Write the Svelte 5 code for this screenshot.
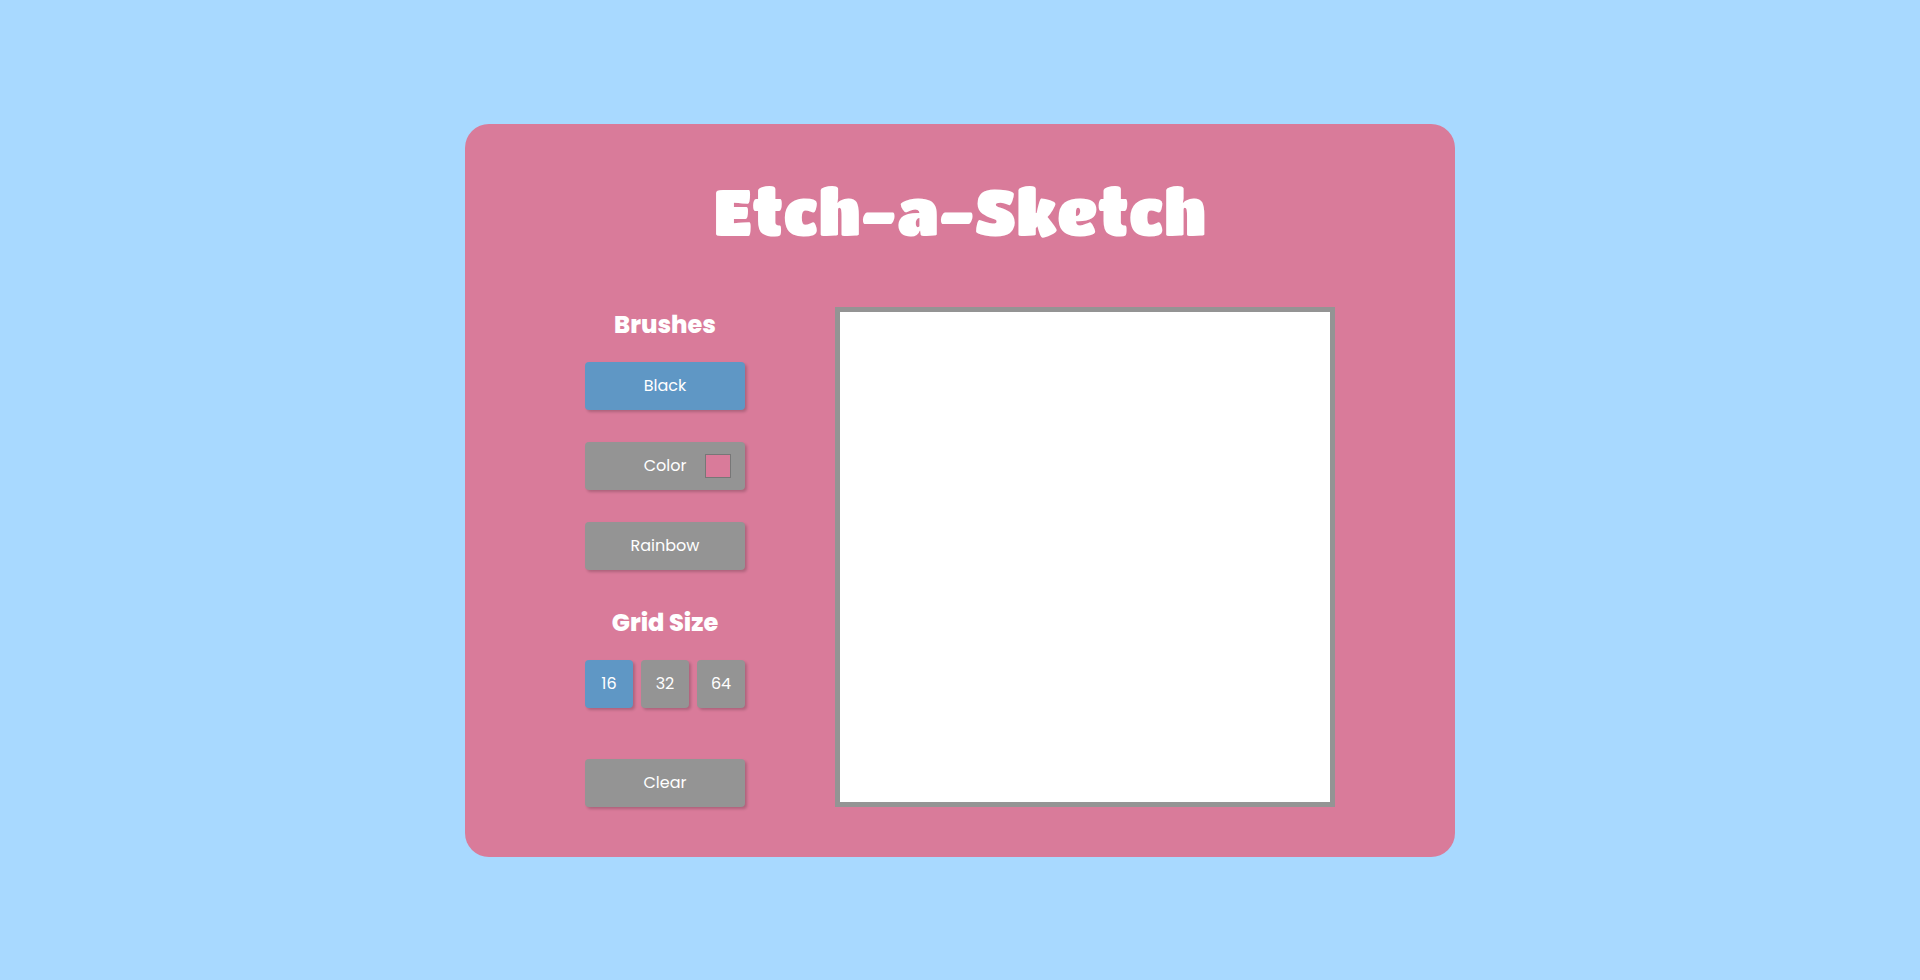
<script>
  let brush = $state('black');
  let size = $state(16);
  let color = $state('#d97b9a');
  let board;

  const brushes = [
    { id: 'black', label: 'Black' },
    { id: 'color', label: 'Color' },
    { id: 'rainbow', label: 'Rainbow' }
  ];
  const sizes = [16, 32, 64];

  function clear() {
    board.getContext('2d').clearRect(0, 0, board.width, board.height);
  }

  function setSize(n) {
    size = n;
    clear();
  }

  function ink() {
    if (brush === 'color') return color;
    if (brush === 'rainbow') return `hsl(${Math.floor(Math.random() * 360)} 90% 60%)`;
    return '#000';
  }

  function paint(event) {
    const box = board.getBoundingClientRect();
    const cell = board.width / size;
    const col = Math.floor(((event.clientX - box.left - board.clientLeft) / board.clientWidth) * size);
    const row = Math.floor(((event.clientY - box.top - board.clientTop) / board.clientHeight) * size);
    const ctx = board.getContext('2d');
    ctx.fillStyle = ink();
    ctx.fillRect(col * cell, row * cell, cell, cell);
  }
</script>

<main class="page">
  <div class="card">
    <h1>Etch-a-Sketch</h1>
    <div class="content">
      <div class="controls">
        <section aria-labelledby="brushes-title">
          <h2 id="brushes-title">Brushes</h2>
          <div class="stack">
            {#each brushes as b}
              <div class="brush">
                <button type="button" class:active={brush === b.id} onclick={() => (brush = b.id)}>{b.label}</button>
                {#if b.id === 'color'}
                  <input type="color" aria-label="Brush color" bind:value={color} />
                {/if}
              </div>
            {/each}
          </div>
        </section>
        <section aria-labelledby="size-title">
          <h2 id="size-title">Grid Size</h2>
          <div class="sizes">
            {#each sizes as n}
              <button type="button" class:active={size === n} onclick={() => setSize(n)}>{n}</button>
            {/each}
          </div>
        </section>
        <button type="button" class="clear" onclick={clear}>Clear</button>
      </div>
      <canvas bind:this={board} width="960" height="960" aria-label="Drawing board" onpointermove={paint}></canvas>
    </div>
  </div>
</main>

<style>
  :global(body) {
    margin: 0;
    background: #a8d9ff;
  }

  .page {
    box-sizing: border-box;
    min-height: 100vh;
    display: flex;
    align-items: center;
    justify-content: center;
    font-family: Poppins, Inter, sans-serif;
    color: #fff;
  }

  .card {
    padding: 50px 120px;
    border-radius: 24px;
    background: #d97b9a;
  }

  h1 {
    margin: 0 0 59px;
    font-family: 'Titan One', Lato, sans-serif;
    font-size: 64px;
    font-weight: 400;
    line-height: 74px;
    text-align: center;
  }

  .content {
    display: flex;
    flex-wrap: wrap;
    justify-content: center;
    gap: 90px;
  }

  .controls {
    width: 160px;
    display: flex;
    flex-direction: column;
    gap: 35px;
  }

  h2 {
    margin: 0 0 19px;
    font-size: 24px;
    font-weight: 800;
    line-height: 36px;
    text-align: center;
  }

  .stack {
    display: flex;
    flex-direction: column;
    gap: 32px;
  }

  .brush {
    position: relative;
    display: flex;
  }

  .sizes {
    display: flex;
    gap: 8px;
  }

  button {
    flex: 1;
    height: 48px;
    padding: 0;
    border: 0;
    border-radius: 4px;
    background: #949494;
    box-shadow: 2px 2px 3px rgba(0, 0, 0, 0.2);
    color: #fff;
    font-family: inherit;
    font-size: 16px;
    line-height: 24px;
    cursor: pointer;
  }

  button.active {
    background: #5f97c5;
  }

  .clear {
    flex: none;
    margin-top: auto;
  }

  input {
    position: absolute;
    top: 12px;
    right: 14px;
    box-sizing: border-box;
    width: 26px;
    height: 24px;
    padding: 0;
    border: 0;
    background: none;
    cursor: pointer;
  }

  input::-webkit-color-swatch-wrapper {
    padding: 0;
  }

  input::-webkit-color-swatch {
    border: 1px solid #777;
  }

  canvas {
    box-sizing: border-box;
    width: 500px;
    max-width: 100%;
    aspect-ratio: 1;
    border: 5px solid #949494;
    background: #fff;
    touch-action: none;
  }
</style>
